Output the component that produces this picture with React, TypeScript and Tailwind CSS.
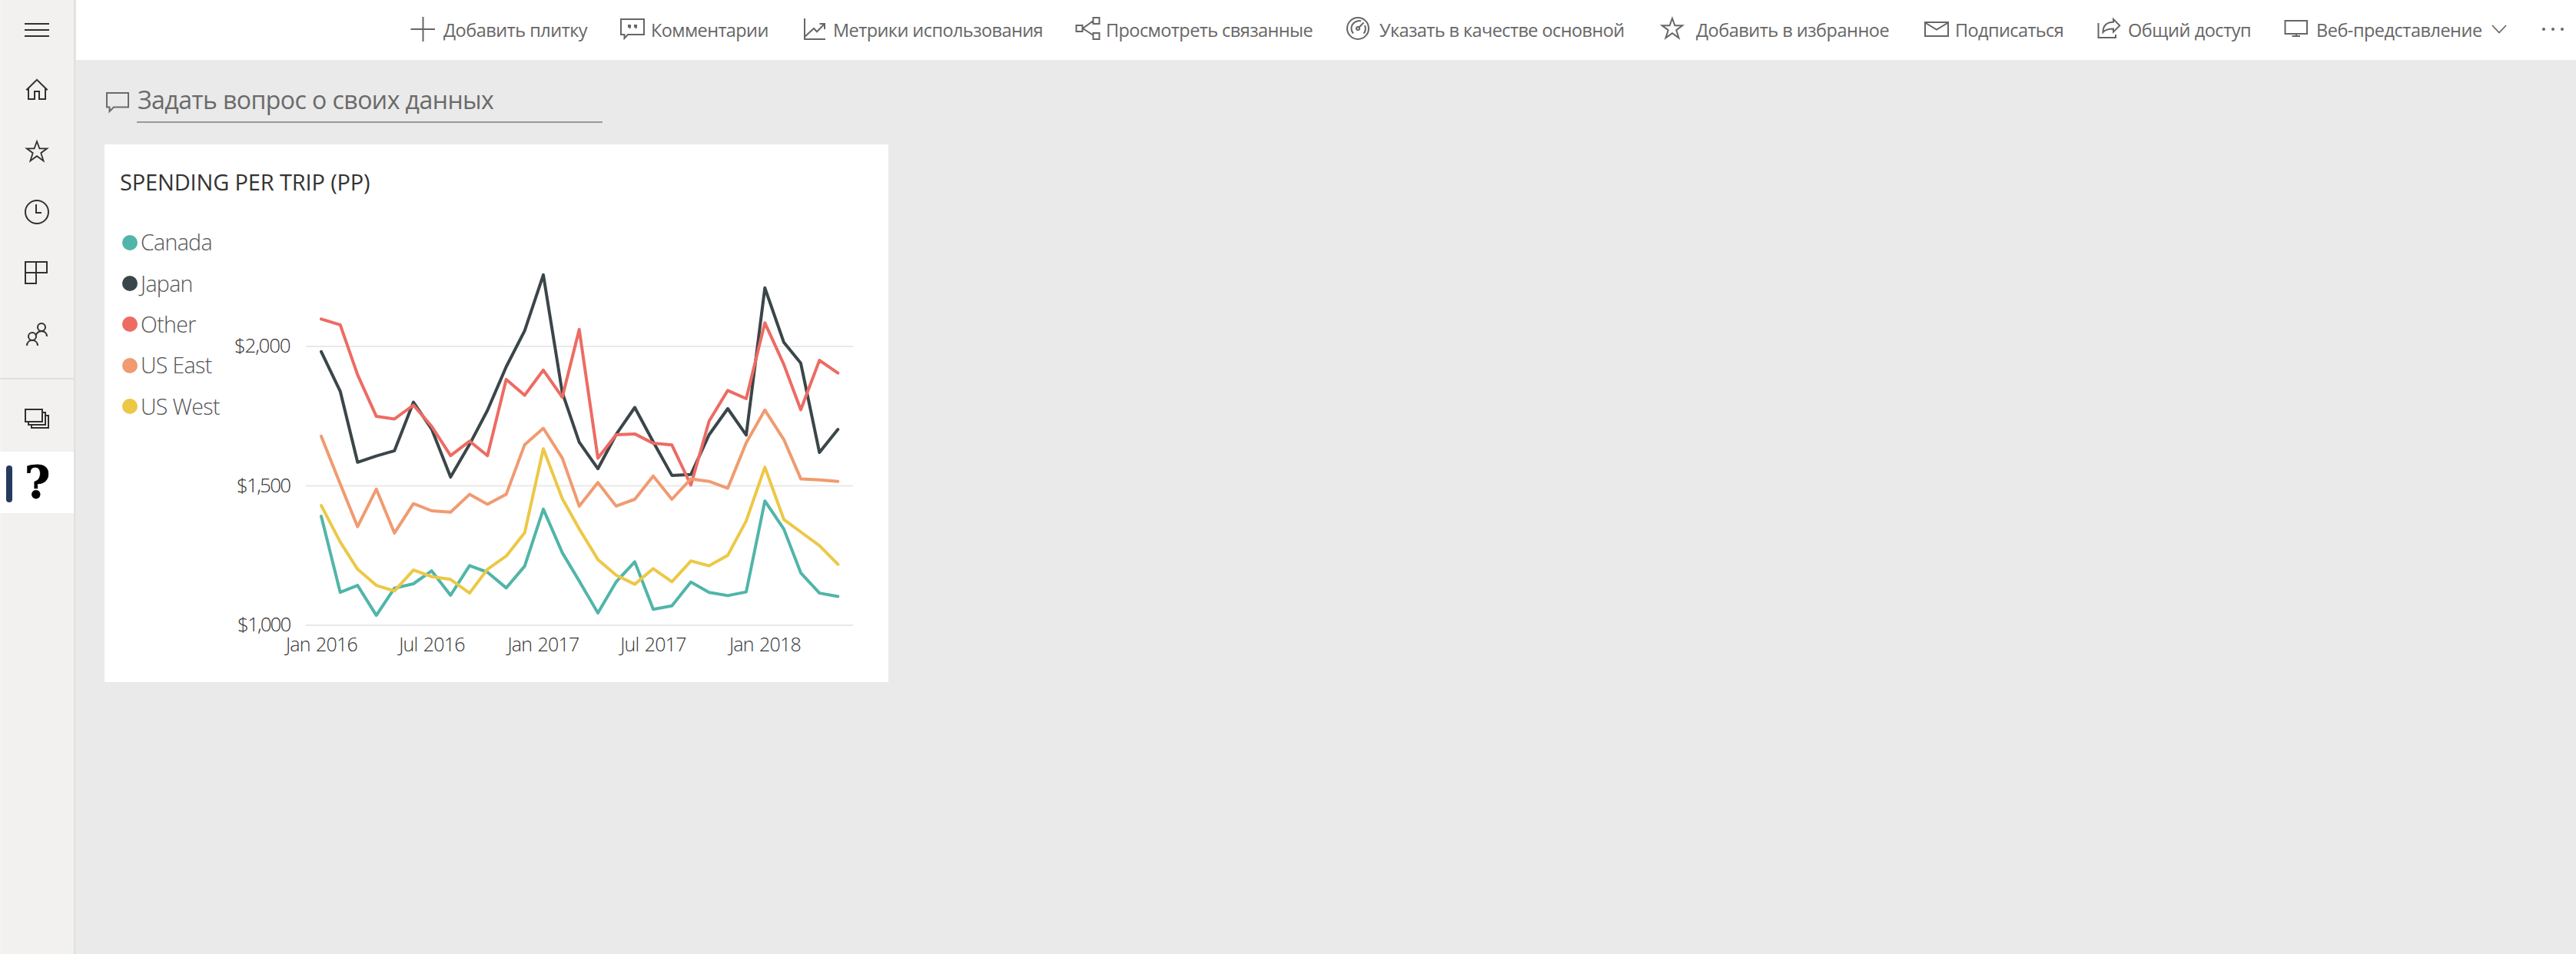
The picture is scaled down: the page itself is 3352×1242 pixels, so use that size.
import type { ReactNode } from "react";

/* Left navigation: every icon is drawn in a cell of the 96px wide rail. */
function NavCell({ y, h = 80, cls, children }: { y: number; h?: number; cls: string; children: ReactNode }) {
  return (
    <button className={`block w-24 shrink-0 ${cls}`}>
      <svg
        viewBox={`0 ${y} 96 ${h}`}
        className="block h-full w-full"
        fill="none"
        stroke="#323130"
        strokeWidth="2"
      >
        {children}
      </svg>
    </button>
  );
}

function Sidebar() {
  return (
    <nav className="flex w-24 shrink-0 flex-col border-l-2 border-[#f5f4f3] bg-[#f2f1f0]">
      <div className="-ml-0.5 flex flex-col">
        <NavCell y={0} h={78} cls="h-[78px]">
          <path d="M32 31H64M32 39H64M32 47H64" />
        </NavCell>
        <NavCell y={78} cls="h-20">
          <path d="M34.3 117.3L48 103.8L61.7 117.3M37 115V129H45V119H51V129H59V115" />
        </NavCell>
        <NavCell y={158} cls="h-20">
          <path strokeWidth="1.8" d="M48 184L51.4 193.3H61.2L53.3 199.2L56.5 209.4L48 203.2L39.5 209.4L42.7 199.2L34.8 193.3H44.6Z" />
        </NavCell>
        <NavCell y={238} cls="h-20">
          <circle cx="48" cy="276" r="15" />
          <path d="M47 266V277H54" />
        </NavCell>
        <NavCell y={318} cls="h-20">
          <path d="M33 341H61V355H33ZM47 341V369H33V355" />
        </NavCell>
        <NavCell y={398} cls="h-20">
          <circle cx="54" cy="426" r="5" />
          <circle cx="42" cy="438" r="5" />
          <path d="M46.5 437C49 429.5 60.8 429 61 438M35 450C35.4 440.8 48.6 440.8 49 450" />
        </NavCell>
        <div className="mt-3.5 h-0.5 w-24 bg-[#e1dfdd]" />
        <NavCell y={508} cls="mt-3.5 h-20">
          <path d="M33 533H55V549H33ZM56 537H59V553H37V550M60 541H63V557H41V554" />
        </NavCell>
        <button className="flex h-20 w-24 items-center bg-white pl-2">
          <span className="mt-1 h-12 w-2 rounded bg-[#243a5e]" />
          <span className="ml-4 font-['DejaVu_Serif',serif] text-[57px] leading-[80px] font-bold text-black [-webkit-text-stroke:0.8px_black]">?</span>
        </button>
      </div>
    </nav>
  );
}

/* Toolbar icon: a strip of the 78px high bar that begins at x. */
function BarIcon({ x, w, cls, children }: { x: number; w: number; cls: string; children: ReactNode }) {
  return (
    <svg
      viewBox={`${x} 0 ${w} 78`}
      className={`block h-[78px] shrink-0 ${cls}`}
      fill="none"
      stroke="#666666"
      strokeWidth="2"
    >
      {children}
    </svg>
  );
}

function Toolbar() {
  return (
    <header className="flex h-[78px] shrink-0 items-center bg-white pl-[435px] font-['Open_Sans',sans-serif] text-[23.5px] leading-[78px] whitespace-nowrap text-[#666666]">
      <button className="flex w-[273px] shrink-0 items-center">
        <BarIcon x={534} w={43} cls="w-[43px]">
          <path d="M550.5 22V54M534.5 38H566" />
        </BarIcon>
        <span className="tracking-[-0.5px]">Добавить плитку</span>
      </button>
      <button className="flex w-[238px] shrink-0 items-center">
        <BarIcon x={807} w={40} cls="w-10">
          <path d="M808 25H838V45H817L812.5 50V45H808Z" />
          <path fill="#666666" stroke="none" d="M817 32H821V36L819 38V36H817ZM825 32H829V36L827 38V36H825Z" />
        </BarIcon>
        <span className="tracking-[-0.6px]">Комментарии</span>
      </button>
      <button className="flex w-[354px] shrink-0 items-center">
        <BarIcon x={1045} w={39} cls="w-[39px]">
          <path d="M1047 24V51H1074M1047 48L1059 37L1063 41.3L1072.5 31.5M1066.5 31H1073V38" />
        </BarIcon>
        <span className="tracking-[-0.57px]">Метрики использования</span>
      </button>
      <button className="flex w-[353px] shrink-0 items-center">
        <BarIcon x={1399} w={40} cls="w-10">
          <path d="M1400.5 33H1408.5V41H1400.5ZM1422.5 23H1430.5V31H1422.5ZM1422.5 43H1430.5V51H1422.5ZM1422 27.5L1409 37L1422 45.5" />
        </BarIcon>
        <span className="tracking-[-0.57px]">Просмотреть связанные</span>
      </button>
      <button className="flex w-[408px] shrink-0 items-center">
        <BarIcon x={1752} w={43} cls="w-[43px]">
          <circle cx="1767" cy="37" r="14" />
          <path d="M1761 43.5C1757.5 39.5 1757.5 34 1761 30.5C1764 27.5 1768.500 26.5 1771 27.5M1776 33C1777.5 37 1777 40.500 1774.500 43.500M1768.500 35.500L1774.500 29.500" />
          <circle cx="1767" cy="37" r="2" />
        </BarIcon>
        <span className="tracking-[-0.58px]">Указать в качестве основной</span>
      </button>
      <button className="flex w-[343px] shrink-0 items-center">
        <BarIcon x={2160} w={47} cls="w-[47px]">
          <path d="M2176 24L2179.4 33.3H2189.2L2181.3 39.2L2184.5 49.4L2176 43.2L2167.5 49.4L2170.7 39.2L2162.8 33.3H2172.6Z" />
        </BarIcon>
        <span className="tracking-[-0.5px]">Добавить в избранное</span>
      </button>
      <button className="flex w-[226px] shrink-0 items-center">
        <BarIcon x={2503} w={41} cls="w-[41px]">
          <path d="M2505 29H2535V47H2505ZM2505 29.5L2520 38.5L2535 29.5" />
        </BarIcon>
        <span className="tracking-[-0.6px]">Подписаться</span>
      </button>
      <button className="flex w-[243px] shrink-0 items-center">
        <BarIcon x={2729} w={40} cls="w-10">
          <path d="M2730.5 30V49H2753V45M2750 25L2758.3 33.3L2750 41.6V37.5C2743 37.5 2739.5 38.5 2736.5 42C2736.5 34 2741 29 2750 28.8Z" />
        </BarIcon>
        <span className="tracking-[-0.45px]">Общий доступ</span>
      </button>
      <button className="flex w-[335px] shrink-0 items-center">
        <BarIcon x={2972} w={42} cls="w-[42px]">
          <path d="M2973.5 27H3002V44H2973.5ZM2988 44V47M2982.5 47H2993" />
        </BarIcon>
        <span className="w-[228px] text-left tracking-[-0.5px]">Веб-представление</span>
        <BarIcon x={3242} w={22} cls="w-[22px]">
          <path strokeWidth="1.7" d="M3243 33L3252 42.5L3261 33" />
        </BarIcon>
      </button>
      <button className="shrink-0">
        <BarIcon x={3307} w={32} cls="w-8">
          <g fill="#666666" stroke="none">
            <circle cx="3310" cy="38" r="2" />
            <circle cx="3322" cy="38" r="2" />
            <circle cx="3334" cy="38" r="2" />
          </g>
        </BarIcon>
      </button>
    </header>
  );
}

const MONTHS = [
  418, 442.7, 465.3, 489.7, 513.3, 538, 561.7, 586.3, 611, 634.3, 658.7, 682.7, 707, 731.7, 753.7, 778,
  801.7, 826, 850, 874.3, 899, 922.7, 947, 971, 995.3, 1020, 1042, 1066.3, 1090.3,
];

const SERIES = [
  {
    name: "Canada",
    color: "#51b5a9",
    ys: [672.1, 771.1, 762.1, 801.1, 765.7, 760, 743.2, 775, 736.4, 745, 765.4, 737.1, 662.9, 719.6, 756.4, 798, 757.7, 731.4, 793.2, 788.7, 757.7, 771.3, 775.4, 770.6, 652.2, 688.9, 745.8, 772.1, 776.5],
  },
  {
    name: "Japan",
    color: "#3a4649",
    ys: [457.9, 509.3, 601.8, 593.6, 586.8, 523.6, 558.6, 621.1, 578.6, 534.3, 477.5, 430.7, 357.9, 511.1, 575.7, 610.2, 565.7, 530.5, 575.3, 618.9, 617.8, 566, 532, 566.4, 374.8, 445.8, 472.8, 589, 559],
  },
  {
    name: "Other",
    color: "#ed6b63",
    ys: [415.4, 422.9, 487.9, 542.1, 545.4, 527.5, 555, 593.2, 574.3, 593.2, 493.9, 514.6, 481.8, 517.1, 428.9, 596.4, 566, 564.9, 577.1, 579.3, 631.5, 548.3, 508.3, 519, 420.3, 474.6, 533.5, 469.1, 485.7],
  },
  {
    name: "US East",
    color: "#f09b70",
    ys: [567.9, 630, 685.7, 636.8, 693.9, 655.7, 665, 666.8, 643.6, 656.4, 643.6, 578.9, 557.5, 596.4, 658.9, 628.2, 658.9, 650, 619.7, 650, 623.4, 626.7, 635.6, 576.4, 533.8, 572.3, 623.4, 624.8, 626.7],
  },
  {
    name: "US West",
    color: "#ecc846",
    ys: [658.2, 705.7, 741.1, 762.1, 769.3, 742.1, 750.7, 754.3, 772.1, 741.1, 723.9, 693.6, 584.3, 649.3, 688.6, 728.4, 748.8, 760.6, 740.3, 757.3, 730.3, 736.6, 722.9, 678.1, 608.2, 676.3, 692.5, 710.3, 734.7],
  },
];

const Y_TICKS = [
  { y: 451, label: "$2,000", cls: "tracking-[-1.2px]" },
  { y: 632.5, label: "$1,500", cls: "tracking-[-1.7px]" },
  { y: 814, label: "$1,000", cls: "tracking-[-1.9px]" },
];

const X_TICKS = [
  { x: 418.5, label: "Jan 2016" },
  { x: 562, label: "Jul 2016" },
  { x: 707, label: "Jan 2017" },
  { x: 850, label: "Jul 2017" },
  { x: 995.5, label: "Jan 2018" },
];

function SpendingChart() {
  return (
    <svg viewBox="296 288 860 600" className="block h-[600px] w-[860px] shrink-0 font-['Open_Sans',sans-serif] font-light">
      {Y_TICKS.map((t) => (
        <g key={t.label}>
          <path d={`M398 ${t.y}H1110`} stroke="#e9e9e9" strokeWidth="2" />
          <text x="377.5" y={t.y + 8} textAnchor="end" fill="#333333" className={`text-[26px] ${t.cls}`}>
            {t.label}
          </text>
        </g>
      ))}
      {X_TICKS.map((t) => (
        <text key={t.label} x={t.x} y="848" textAnchor="middle" fill="#333333" className="text-[25px] tracking-[-0.75px] [word-spacing:1.5px]">
          {t.label}
        </text>
      ))}
      {SERIES.map((s) => (
        <polyline
          key={s.name}
          points={s.ys.map((y, i) => `${MONTHS[i]},${y}`).join(" ")}
          fill="none"
          stroke={s.color}
          strokeWidth="4"
          strokeLinecap="round"
          strokeLinejoin="round"
        />
      ))}
    </svg>
  );
}

export default function App() {
  return (
    <div className="flex h-[1242px] w-[3352px] overflow-hidden bg-[#eaeaea] font-['Open_Sans',sans-serif]">
      <Sidebar />
      <div className="w-[3px] shrink-0 bg-linear-to-r from-[#dededc] to-[#e8e7e6]" />
      <main className="flex min-w-0 flex-1 flex-col">
        <Toolbar />
        <div className="flex pt-[22px] pl-[37px]">
          <svg viewBox="136 100 42 60" className="block h-[60px] w-[42px]" fill="none" stroke="#6a6a6a" strokeWidth="2">
            <path d="M139 121H167V139.500H148L142.500 145V139.500H139Z" />
          </svg>
          <div className="h-[60px] w-[606px] border-b-2 border-[#999999] pl-px text-[32px] leading-[60px] tracking-[-0.55px] whitespace-nowrap text-[#6a6a6a]">
            Задать вопрос о своих данных
          </div>
        </div>
        <section className="mt-7 ml-[37px] flex h-[700px] w-[1020px] flex-col bg-white">
          <h2 className="h-[100px] pl-5 text-[29px] leading-[98px] tracking-[-0.15px] whitespace-nowrap text-[#333333]">SPENDING PER TRIP (PP)</h2>
          <div className="flex">
            <ul className="w-40 shrink-0 pt-px pl-[23px]">
              {SERIES.map((s) => (
                <li key={s.name} className="flex h-[53.4px] items-center whitespace-nowrap">
                  <span className="size-5 shrink-0 rounded-full" style={{ backgroundColor: s.color }} />
                  <span className="ml-1 text-[28.5px] leading-[53px] font-light tracking-[-0.65px] text-[#555555]">{s.name}</span>
                </li>
              ))}
            </ul>
            <SpendingChart />
          </div>
        </section>
      </main>
    </div>
  );
}
